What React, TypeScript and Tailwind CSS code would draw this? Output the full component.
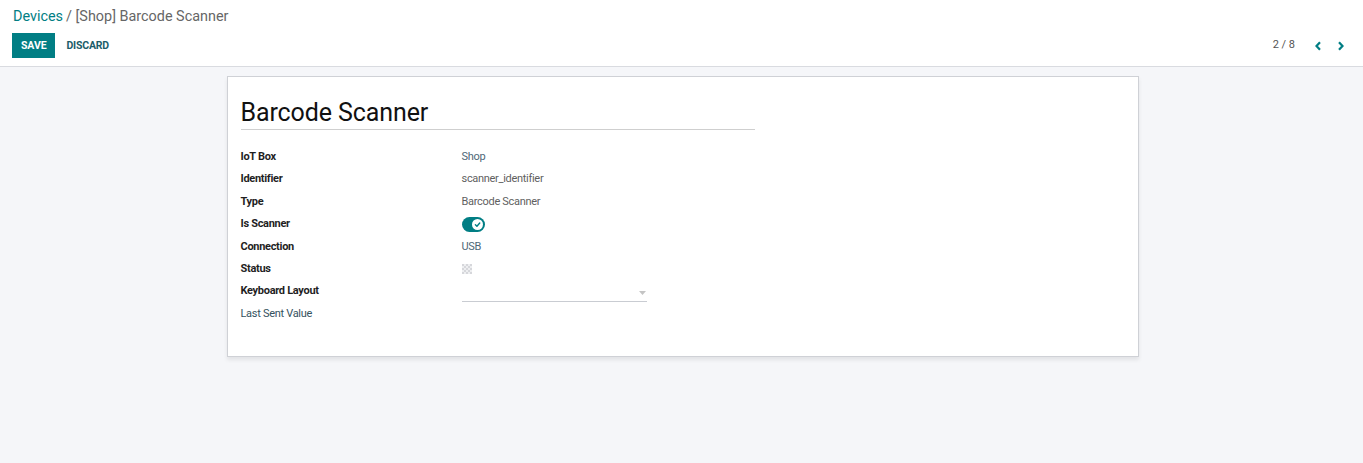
import React from "react";

const font = { fontFamily: "Roboto, 'Noto Sans', sans-serif" };

type Row = { label: string; value?: React.ReactNode; bold?: boolean };

function Toggle() {
  return (
    <div className="w-[23px] h-[15px] rounded-full bg-[#017e84] flex items-center justify-end pr-[2px]">
      <div className="w-[11px] h-[11px] rounded-full bg-white flex items-center justify-center">
        <svg width="7" height="7" viewBox="0 0 10 10">
          <path d="M2 5.2 L4.2 7.4 L8.2 2.8" fill="none" stroke="#017e84" strokeWidth="2" strokeLinecap="round" strokeLinejoin="round" />
        </svg>
      </div>
    </div>
  );
}

function Checker() {
  const cells = Array.from({ length: 25 }, (_, i) => i);
  return (
    <div className="grid grid-cols-5 w-[10px] h-[10px]">
      {cells.map((i) => (
        <div
          key={i}
          className={(Math.floor(i / 5) + (i % 5)) % 2 === 0 ? "bg-[#d6d7db]" : "bg-[#eeeff1]"}
        />
      ))}
    </div>
  );
}

function SelectField() {
  return (
    <div className="w-[185px] h-[20px] border-b border-[#c9ccd2] flex items-center justify-end pr-[1px] mt-[1px]">
      <svg width="7" height="4" viewBox="0 0 7 4" className="mt-[3px]">
        <path d="M0 0 H7 L3.5 4 Z" fill="#c4c4c4" />
      </svg>
    </div>
  );
}

export default function App() {
  const rows: Row[] = [
    { label: "IoT Box", value: <span className="text-[#4e6777]">Shop</span>, bold: true },
    { label: "Identifier", value: "scanner_identifier", bold: true },
    { label: "Type", value: "Barcode Scanner", bold: true },
    { label: "Is Scanner", value: <Toggle />, bold: true },
    { label: "Connection", value: <span className="text-[#4e6777]">USB</span>, bold: true },
    { label: "Status", value: <Checker />, bold: true },
    { label: "Keyboard Layout", value: <SelectField />, bold: true },
    { label: "Last Sent Value", bold: false },
  ];

  return (
    <div className="w-[1363px] h-[463px] bg-[#f5f6f9] flex flex-col" style={font}>
      <div className="bg-white h-[67px] border-b border-[#d9dbe0] px-[12px] flex flex-col">
        <div className="text-[14.4px] leading-none pt-[10px] pl-[1px] h-[33px] flex items-start">
          <span className="text-[#017e84]">Devices</span>
          <span className="text-[#666] ml-[3px]">/ [Shop] Barcode Scanner</span>
        </div>
        <div className="flex items-center justify-between">
          <div className="flex items-center">
            <button className="h-[25px] px-[9px] bg-[#017e84] text-white text-[10.5px] font-bold tracking-[-0.1px]">SAVE</button>
            <button className="h-[25px] px-[11px] text-[#1c5d6a] text-[10.5px] font-bold tracking-[-0.2px]">DISCARD</button>
          </div>
          <div className="flex items-center pr-[6px]">
            <span className="text-[11px] text-[#555] mr-[19px]">2 / 8</span>
            <svg width="8" height="10" viewBox="0 0 8 10" className="mr-[15px]">
              <path d="M6 1.2 L2.5 5 L6 8.8" fill="none" stroke="#017e84" strokeWidth="2.2" />
            </svg>
            <svg width="8" height="10" viewBox="0 0 8 10">
              <path d="M2 1.2 L5.5 5 L2 8.8" fill="none" stroke="#017e84" strokeWidth="2.2" />
            </svg>
          </div>
        </div>
      </div>

      <div className="flex justify-center pt-[9px] pl-[2px]">
        <div className="w-[912px] h-[281px] bg-white border border-[#cfd1d6] shadow-[0_3px_4px_rgba(0,0,0,0.08)] px-[13px] pt-[20px]">
          <div className="w-[514px] border-b border-[#cfcfcf]">
            <div className="text-[25px] leading-[32px] text-[#111] tracking-[-0.1px]">Barcode Scanner</div>
          </div>
          <div className="mt-[16px] flex flex-col">
            {rows.map((r) => (
              <div key={r.label} className="flex items-center h-[22.4px]">
                <div
                  className={
                    "w-[221px] text-[11px] tracking-[-0.3px] " +
                    (r.bold ? "font-bold text-[#1f1f1f]" : "text-[#35525e]")
                  }
                >
                  {r.label}
                </div>
                <div className="text-[11px] tracking-[-0.3px] text-[#5f5f5f] flex items-center">{r.value}</div>
              </div>
            ))}
          </div>
        </div>
      </div>
    </div>
  );
}
